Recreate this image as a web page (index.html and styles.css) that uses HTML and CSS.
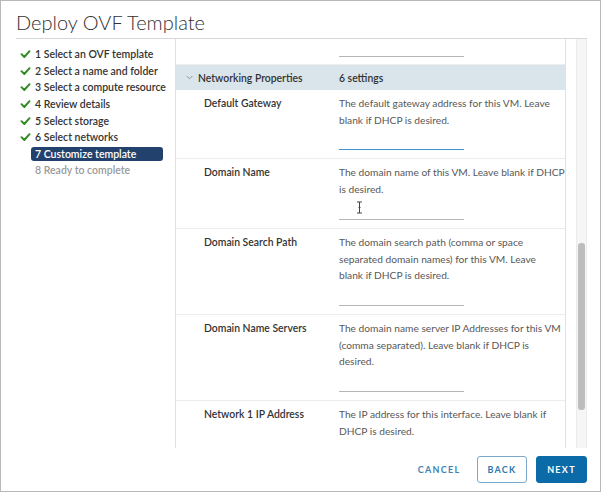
FILE: index.html
```html
<!DOCTYPE html>
<html>
<head>
<meta charset="utf-8">
<link rel="stylesheet" href="styles.css">
</head>
<body>
<div class="window">
  <h1 class="title">Deploy OVF Template</h1>
  <div class="main">
    <nav class="steps">
      <div class="step done"><svg class="check" viewBox="0 0 10 8"><path d="M1 4.2 L3.8 7 L9 1.2" /></svg><span class="label">1 Select an OVF template</span></div>
      <div class="step done"><svg class="check" viewBox="0 0 10 8"><path d="M1 4.2 L3.8 7 L9 1.2" /></svg><span class="label">2 Select a name and folder</span></div>
      <div class="step done"><svg class="check" viewBox="0 0 10 8"><path d="M1 4.2 L3.8 7 L9 1.2" /></svg><span class="label">3 Select a compute resource</span></div>
      <div class="step done"><svg class="check" viewBox="0 0 10 8"><path d="M1 4.2 L3.8 7 L9 1.2" /></svg><span class="label">4 Review details</span></div>
      <div class="step done"><svg class="check" viewBox="0 0 10 8"><path d="M1 4.2 L3.8 7 L9 1.2" /></svg><span class="label">5 Select storage</span></div>
      <div class="step done"><svg class="check" viewBox="0 0 10 8"><path d="M1 4.2 L3.8 7 L9 1.2" /></svg><span class="label">6 Select networks</span></div>
      <div class="step active"><span class="slot"></span><span class="label">7 Customize template</span></div>
      <div class="step pending"><span class="slot"></span><span class="label">8 Ready to complete</span></div>
    </nav>
    <div class="content">
      <div class="scroll">
        <div class="prev"><div class="cell-label"></div><div class="cell-desc"><div class="input"></div></div></div>
        <div class="group-head">
          <div class="head-label"><svg class="chev" viewBox="0 0 8 5"><path d="M0.8 0.8 L4 4 L7.2 0.8" /></svg>Networking Properties</div>
          <div class="head-count">6 settings</div>
        </div>
        <div class="row">
          <div class="cell-label">Default Gateway</div>
          <div class="cell-desc"><span class="line">The default gateway address for this VM. Leave</span><span class="line">blank if DHCP is desired.</span><div class="input focus"></div></div>
        </div>
        <div class="row">
          <div class="cell-label">Domain Name</div>
          <div class="cell-desc"><span class="line">The domain name of this VM. Leave blank if DHCP</span><span class="line">is desired.</span><div class="input"><svg class="ibeam" viewBox="0 0 7 13"><path d="M1 1 H6 M3.5 1 V12 M1 12 H6 M2.5 6.5 H4.5" /></svg></div></div>
        </div>
        <div class="row">
          <div class="cell-label">Domain Search Path</div>
          <div class="cell-desc"><span class="line">The domain search path (comma or space</span><span class="line">separated domain names) for this VM. Leave</span><span class="line">blank if DHCP is desired.</span><div class="input"></div></div>
        </div>
        <div class="row">
          <div class="cell-label">Domain Name Servers</div>
          <div class="cell-desc"><span class="line">The domain name server IP Addresses for this VM</span><span class="line">(comma separated). Leave blank if DHCP is</span><span class="line">desired.</span><div class="input"></div></div>
        </div>
        <div class="row">
          <div class="cell-label">Network 1 IP Address</div>
          <div class="cell-desc"><span class="line">The IP address for this interface. Leave blank if</span><span class="line">DHCP is desired.</span><div class="input"></div></div>
        </div>
      </div>
      <div class="scrollbar"><div class="thumb"></div></div>
    </div>
  </div>
  <div class="footer">
    <button class="btn flat">CANCEL</button>
    <button class="btn outline">BACK</button>
    <button class="btn primary">NEXT</button>
  </div>
</div>
</body>
</html>
```

FILE: styles.css
```css
* { box-sizing: border-box; }
html, body { margin: 0; padding: 0; background: #fff; }
body { font-family: "Lato", "Open Sans", sans-serif; color: #333; }

.window {
  width: 601px;
  height: 492px;
  border: 1px solid #b8b8b8;
  display: flex;
  flex-direction: column;
  overflow: hidden;
  background: #fff;
}

.title {
  margin: 0;
  height: 37px;
  padding: 9px 0 0 15px;
  font-size: 20px;
  line-height: 24px;
  font-weight: 300;
  color: #313131;
}

.main {
  display: flex;
  margin: 0 13px 0 15px;
  border-top: 1px solid #d7d7d7;
  height: 410px;
}

.steps {
  width: 160px;
  border-right: 1px solid #e0e0e0;
  padding: 7px 12px 0 4px;
  display: flex;
  flex-direction: column;
}

.step {
  display: flex;
  align-items: center;
  height: 16.6px;
  font-size: 10.5px;
  font-weight: 600;
  color: #333;
}

.check, .slot {
  width: 11px;
  height: 8px;
  flex: none;
}
.check path {
  fill: none;
  stroke: #2f8a21;
  stroke-width: 1.9;
  stroke-linecap: round;
  stroke-linejoin: round;
}

.label {
  flex: 1;
  padding: 0 4px;
  line-height: 14px;
  border-radius: 3px;
  white-space: nowrap;
}
.step.active .label {
  background: #22416c;
  color: #fff;
}
.step.pending .label { color: #9a9a9a; }

.content {
  flex: 1;
  display: flex;
  gap: 10px;
}

.scroll {
  width: 390px;
  border-right: 1px solid #e2e2e2;
  overflow: hidden;
  font-size: 10.4px;
}

.prev, .row, .group-head {
  display: flex;
}

.prev { height: 26px; border-bottom: 1px solid #eee; }
.prev .input { height: 18px; margin-top: 0; }

.group-head {
  height: 25px;
  align-items: center;
  background: #d9e4eb;
  font-weight: 600;
  color: #333;
}
.head-label {
  width: 163px;
  padding-left: 10px;
  display: flex;
  align-items: center;
}
.chev { width: 7px; height: 5px; margin-right: 5px; }
.chev path { fill: none; stroke: #8a8a8a; stroke-width: 1; }

.row {
  border-bottom: 1px solid #ececec;
  padding: 5px 0 8px;
}

.cell-label {
  width: 163px;
  flex: none;
  padding-left: 28px;
  line-height: 16.7px;
  font-weight: 600;
  color: #333;
}
.cell-desc {
  flex: 1;
  display: flex;
  flex-direction: column;
  font-size: 10.2px;
  line-height: 16.7px;
  color: #585858;
}
.line {
  display: block;
  white-space: nowrap;
}

.input {
  position: relative;
  width: 125px;
  height: 22px;
  border-bottom: 1px solid #b5b5b5;
}
.input.focus { border-bottom-color: #3f93cf; }

.ibeam {
  position: absolute;
  left: 17px;
  top: 3px;
  width: 7px;
  height: 13px;
}
.ibeam path { fill: none; stroke: #444; stroke-width: 1; }

.scrollbar {
  width: 11px;
  background: #f6f6f6;
  border-left: 1px solid #ebebeb;
  border-right: 1px solid #ebebeb;
  display: flex;
  flex-direction: column;
  padding: 204px 1px 0;
}
.thumb {
  height: 167px;
  background: #bdbdbd;
  border-radius: 3px;
}

.footer {
  flex: 1;
  display: flex;
  justify-content: flex-end;
  align-items: flex-start;
  gap: 9px;
  padding: 8px 13px 0 0;
}

.btn {
  height: 27px;
  font-family: "Lato", "Open Sans", sans-serif;
  font-size: 9px;
  font-weight: 700;
  letter-spacing: 1.3px;
  border-radius: 3px;
  padding: 0;
  cursor: pointer;
}
.btn.flat {
  background: none;
  border: none;
  color: #3d82b2;
  width: 58px;
}
.btn.outline {
  width: 50px;
  background: #fff;
  border: 1px solid #7aa9cc;
  color: #2b78ad;
}
.btn.primary {
  width: 51px;
  background: #0b6aa8;
  border: 1px solid #0b6aa8;
  color: #fff;
}
```
